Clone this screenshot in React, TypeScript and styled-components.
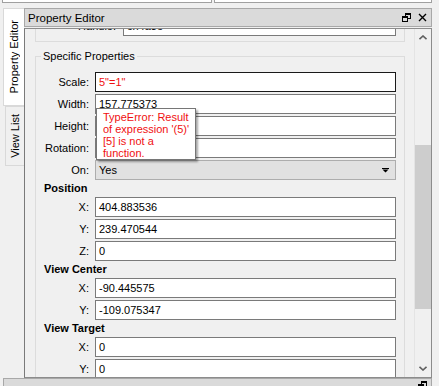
import React from "react";
import styled, { createGlobalStyle } from "styled-components";

const GlobalStyle = createGlobalStyle`
  html, body {
    margin: 0;
    padding: 0;
  }
  body {
    background: #f0f0f0;
    font-family: "Liberation Sans", Arial, sans-serif;
    font-size: 11px;
    color: #000;
    width: 439px;
    height: 386px;
    overflow: hidden;
  }
`;

const Window = styled.div`
  width: 439px;
  height: 386px;
  display: flex;
  flex-direction: column;
  overflow: hidden;
`;

const TopStrip = styled.div`
  display: flex;
  gap: 2px;
  height: 3px;
  padding-left: 2px;
  flex-shrink: 0;
`;

const TopPane = styled.div<{ $w: number }>`
  width: ${(p) => p.$w}px;
  box-sizing: border-box;
  background: #fff;
  border: 1px solid #a0a0a0;
  border-top: none;
`;

const Main = styled.div`
  display: flex;
  height: 375px;
  padding-top: 5px;
  box-sizing: border-box;
  flex-shrink: 0;
`;

const TabBar = styled.div`
  width: 24px;
  display: flex;
  flex-direction: column;
  align-items: flex-end;
`;

const Tab = styled.div<{ $active?: boolean; $h: number }>`
  box-sizing: border-box;
  width: ${(p) => (p.$active ? 21 : 19)}px;
  height: ${(p) => p.$h}px;
  background: ${(p) => (p.$active ? "#fff" : "#f0f0f0")};
  border: 1px solid #d9d9d9;
  border-right: none;
  display: flex;
  align-items: center;
  justify-content: center;

  span {
    writing-mode: vertical-rl;
    transform: rotate(180deg);
    white-space: nowrap;
    line-height: 13px;
  }
`;

const Dock = styled.div`
  width: 408px;
  display: flex;
  flex-direction: column;
`;

const DockTitle = styled.div`
  height: 19px;
  box-sizing: border-box;
  background: #dadada;
  border: 1px solid #a8a8a8;
  display: flex;
  align-items: center;
  padding: 0 4px 0 3px;
  flex-shrink: 0;

  .title {
    flex: 1;
    font-size: 11.5px;
  }
`;

const TitleButtons = styled.div`
  display: flex;
  gap: 7px;
  align-items: center;
`;

const Frame = styled.div`
  margin-top: 1px;
  flex: 1;
  display: flex;
  border: 1px solid #8c8c8c;
  border-left-color: #7a7a7a;
  overflow: hidden;
`;

const ScrollArea = styled.div`
  flex: 1;
  overflow: hidden;
  padding: 0 9px 0 10px;
`;

const Scrollbar = styled.div`
  width: 17px;
  box-sizing: border-box;
  border-left: 1px solid #e4e4e4;
  display: flex;
  flex-direction: column;
  background: #f0f0f0;
`;

const ScrollButton = styled.div`
  height: 17px;
  display: flex;
  align-items: center;
  justify-content: center;
  flex-shrink: 0;
`;

const ScrollTrack = styled.div`
  flex: 1;
`;

const ScrollThumb = styled.div<{ $top: number; $h: number }>`
  margin-top: ${(p) => p.$top}px;
  height: ${(p) => p.$h}px;
  background: #cdcdcd;
`;

const GroupBox = styled.div`
  border: 1px solid #dcdcdc;
  margin-top: -22px;
  padding: 8px 8px 5px 0;
`;

const Fieldset = styled.fieldset`
  margin: 7px 0 0;
  padding: 9px 8px 10px 0;
  border: 1px solid #dcdcdc;
  min-width: 0;

  legend {
    margin-left: 5px;
    padding: 0 2px;
    line-height: 14px;
  }
`;

const FormGrid = styled.div<{ $label: number; $gap: number }>`
  display: grid;
  grid-template-columns: ${(p) => p.$label}px 1fr;
  column-gap: ${(p) => p.$gap}px;
  row-gap: 2px;
  grid-auto-rows: auto;
`;

const Label = styled.div`
  text-align: right;
  height: 20px;
  line-height: 20px;
  white-space: nowrap;
`;

const SectionHeader = styled.div`
  grid-column: 1 / span 2;
  font-weight: bold;
  padding-left: 8px;
  height: 13px;
  line-height: 13px;
`;

const FieldCell = styled.div`
  position: relative;
`;

const Input = styled.div<{ $focused?: boolean; $error?: boolean }>`
  box-sizing: border-box;
  height: 20px;
  background: #fff;
  border: 1px solid ${(p) => (p.$focused ? "#1a1a1a" : "#7a7a7a")};
  color: ${(p) => (p.$error ? "#f01010" : "#000")};
  padding-left: 3px;
  line-height: 18px;
  white-space: nowrap;
  overflow: hidden;
`;

const Combo = styled.div`
  box-sizing: border-box;
  height: 20px;
  background: #e1e1e1;
  border: 1px solid #adadad;
  padding: 0 6px 0 3px;
  line-height: 18px;
  display: flex;
  align-items: center;
  justify-content: space-between;
`;

const Tooltip = styled.div`
  position: absolute;
  top: 14px;
  left: 1px;
  z-index: 2;
  background: #fff;
  border: 1px solid #767676;
  box-shadow: 2px 2px 2px rgba(0, 0, 0, 0.35);
  color: #f01010;
  padding: 2px 6px 0 6px;
  line-height: 12px;
  white-space: nowrap;
`;

const BottomBar = styled.div`
  margin-left: 3px;
  width: 429px;
  height: 19px;
  box-sizing: border-box;
  flex-shrink: 0;
  background: #dadada;
  border: 1px solid #a8a8a8;
  display: flex;
  justify-content: flex-end;
  align-items: flex-start;
  padding: 2px 4px 0 0;
`;

const FloatIcon = () => (
  <svg width="9" height="9" viewBox="0 0 9 9">
    <path d="M3 0H9V6H6V5H8V2H4V3H3Z" fill="#000" />
    <path d="M0 3H6V9H0Z M1 5V8H5V5Z" fill="#000" fillRule="evenodd" />
  </svg>
);

const CloseIcon = () => (
  <svg width="9" height="9" viewBox="0 0 9 9">
    <path d="M1 1L8 8M8 1L1 8" stroke="#000" strokeWidth="1.4" />
  </svg>
);

const Chevron = ({ down }: { down?: boolean }) => (
  <svg width="8" height="5" viewBox="0 0 8 5">
    <polyline
      points={down ? "0.5,0.8 4,4 7.5,0.8" : "0.5,4.2 4,1 7.5,4.2"}
      fill="none"
      stroke="#606060"
      strokeWidth="1.6"
    />
  </svg>
);

const ComboArrow = () => (
  <svg width="7" height="5" viewBox="0 0 7 5">
    <path d="M0 0H7V1H0Z M0.5 1.5H6.5L3.5 4.5Z" fill="#000" />
  </svg>
);

interface Row {
  label: string;
  value: string;
}

const groups: { title: string; rows: Row[] }[] = [
  {
    title: "Position",
    rows: [
      { label: "X:", value: "404.883536" },
      { label: "Y:", value: "239.470544" },
      { label: "Z:", value: "0" },
    ],
  },
  {
    title: "View Center",
    rows: [
      { label: "X:", value: "-90.445575" },
      { label: "Y:", value: "-109.075347" },
    ],
  },
  {
    title: "View Target",
    rows: [
      { label: "X:", value: "0" },
      { label: "Y:", value: "0" },
    ],
  },
];

export default function App() {
  return (
    <Window>
      <GlobalStyle />
      <TopStrip>
        <TopPane $w={210} />
        <TopPane $w={218} />
      </TopStrip>
      <Main>
        <TabBar>
          <Tab $active $h={98}>
            <span>Property Editor</span>
          </Tab>
          <Tab $h={60}>
            <span>View List</span>
          </Tab>
        </TabBar>
        <Dock>
          <DockTitle>
            <span className="title">Property Editor</span>
            <TitleButtons>
              <FloatIcon />
              <CloseIcon />
            </TitleButtons>
          </DockTitle>
          <Frame>
            <ScrollArea>
              <GroupBox>
                <FormGrid $label={80} $gap={7}>
                  <Label>Handle:</Label>
                  <Input>ch4a3e</Input>
                </FormGrid>
              </GroupBox>
              <Fieldset>
                <legend>Specific Properties</legend>
                <FormGrid $label={53} $gap={6}>
                  <Label>Scale:</Label>
                  <Input $focused $error>
                    5"=1"
                  </Input>
                  <Label>Width:</Label>
                  <FieldCell>
                    <Input>157.775373</Input>
                    <Tooltip>
                      TypeError: Result
                      <br />
                      of expression '(5)'
                      <br />
                      [5] is not a
                      <br />
                      function.
                    </Tooltip>
                  </FieldCell>
                  <Label>Height:</Label>
                  <Input>60.000000</Input>
                  <Label>Rotation:</Label>
                  <Input>0</Input>
                  <Label>On:</Label>
                  <Combo>
                    <span>Yes</span>
                    <ComboArrow />
                  </Combo>
                  {groups.map((g) => (
                    <React.Fragment key={g.title}>
                      <SectionHeader>{g.title}</SectionHeader>
                      {g.rows.map((r) => (
                        <React.Fragment key={g.title + r.label}>
                          <Label>{r.label}</Label>
                          <Input>{r.value}</Input>
                        </React.Fragment>
                      ))}
                    </React.Fragment>
                  ))}
                </FormGrid>
              </Fieldset>
            </ScrollArea>
            <Scrollbar>
              <ScrollButton>
                <Chevron />
              </ScrollButton>
              <ScrollTrack>
                <ScrollThumb $top={99} $h={164} />
              </ScrollTrack>
              <ScrollButton>
                <Chevron down />
              </ScrollButton>
            </Scrollbar>
          </Frame>
        </Dock>
      </Main>
      <BottomBar>
        <FloatIcon />
      </BottomBar>
    </Window>
  );
}
